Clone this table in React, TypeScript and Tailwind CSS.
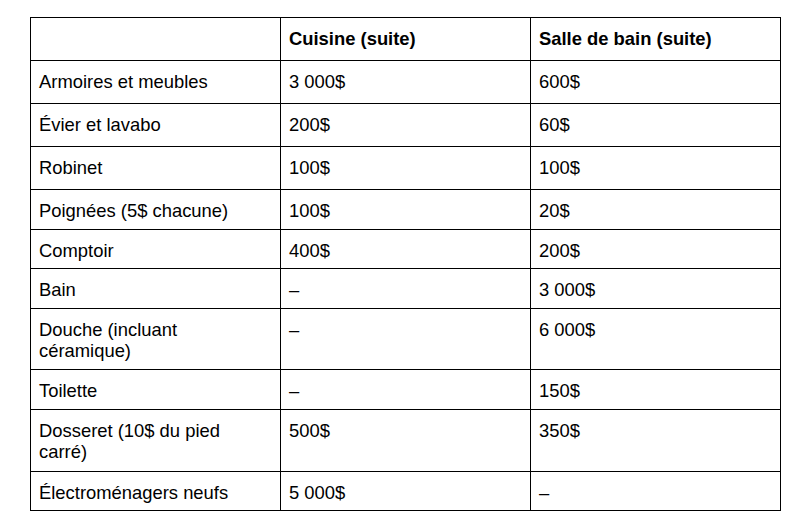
import React from 'react';

interface Row {
  label: string;
  cuisine: string;
  sdb: string;
  h: string;
}

const rows: Row[] = [
  { label: 'Armoires et meubles', cuisine: '3 000$', sdb: '600$', h: 'h-[43px]' },
  { label: 'Évier et lavabo', cuisine: '200$', sdb: '60$', h: 'h-[43px]' },
  { label: 'Robinet', cuisine: '100$', sdb: '100$', h: 'h-[43px]' },
  { label: 'Poignées (5$ chacune)', cuisine: '100$', sdb: '20$', h: 'h-[40px]' },
  { label: 'Comptoir', cuisine: '400$', sdb: '200$', h: 'h-[39px]' },
  { label: 'Bain', cuisine: '–', sdb: '3 000$', h: 'h-[40px]' },
  { label: 'Douche (incluant céramique)', cuisine: '–', sdb: '6 000$', h: 'h-[61px]' },
  { label: 'Toilette', cuisine: '–', sdb: '150$', h: 'h-[40px]' },
  { label: 'Dosseret (10$ du pied carré)', cuisine: '500$', sdb: '350$', h: 'h-[62px]' },
  { label: 'Électroménagers neufs', cuisine: '5 000$', sdb: '–', h: 'h-[39px]' },
];

const cell = 'border border-black align-top pl-[8px] pr-[8px] pt-[10px] pb-[7px] w-[250px]';

const App = () => {
  return (
    <div className="min-h-[526px] w-[799px] bg-white pt-[17px] pl-[30px] font-['Liberation_Sans',Arial,sans-serif] text-[18.4px] leading-[21px] text-black">
      <table className="border-collapse table-fixed w-[751px]">
        <thead>
          <tr className="h-[43px]">
            <th className={cell + ' text-left font-bold'}></th>
            <th className={cell + ' text-left font-bold'}>Cuisine (suite)</th>
            <th className={cell + ' text-left font-bold'}>Salle de bain (suite)</th>
          </tr>
        </thead>
        <tbody>
          {rows.map((row) => (
            <tr key={row.label} className={row.h}>
              <td className={cell}>{row.label}</td>
              <td className={cell}>{row.cuisine}</td>
              <td className={cell}>{row.sdb}</td>
            </tr>
          ))}
        </tbody>
      </table>
    </div>
  );
};

export default App;
